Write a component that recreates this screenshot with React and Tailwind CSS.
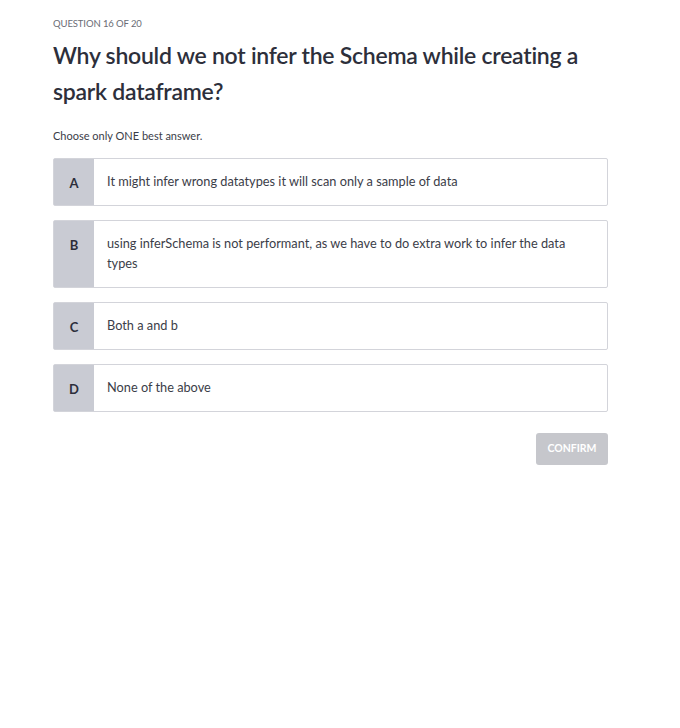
import React from 'react';

const options = [
  { key: 'A', text: 'It might infer wrong datatypes it will scan only a sample of data' },
  { key: 'B', text: 'using inferSchema is not performant, as we have to do extra work to infer the data types' },
  { key: 'C', text: 'Both a and b' },
  { key: 'D', text: 'None of the above' },
];

export default function App() {
  return (
    <div className="min-h-[728px] w-[680px] bg-white font-['Lato',sans-serif] text-[#2d2f3b]">
      <div className="w-[555px] ml-[53px] pt-[18px]">
        <p className="text-[9.5px] leading-[12px] text-[#6a6c75] tracking-[-0.1px]">QUESTION 16 OF 20</p>
        <h1 className="mt-[7px] text-[23px] leading-[36px] font-semibold tracking-[-0.25px] text-[#2d2f3b] pr-[20px]">
          Why should we not infer the Schema while creating a spark dataframe?
        </h1>
        <p className="mt-[20px] text-[11px] leading-[14px] text-[#3b3d48]">Choose only ONE best answer.</p>

        <div className="mt-[15px] flex flex-col gap-[14px]">
          {options.map((o) => (
            <div key={o.key} className="flex border border-[#d3d4da] rounded-[2px] min-h-[48px]">
              <div className="w-[40px] shrink-0 bg-[#c9cbd3] flex items-start justify-center pt-[15px] text-[13px] font-bold text-[#2d2f3b]">
                {o.key}
              </div>
              <div className="flex-1 px-[13px] py-[14px] text-[12.75px] leading-[20px] text-[#3b3d48] pr-[40px]">
                <span className="block -mt-[2px]">{o.text}</span>
              </div>
            </div>
          ))}
        </div>

        <div className="mt-[21px] flex justify-end">
          <button className="w-[72px] h-[32px] rounded-[3px] bg-[#c6c7cc] text-white text-[10.5px] font-bold tracking-[0px]">
            CONFIRM
          </button>
        </div>
      </div>
    </div>
  );
}
